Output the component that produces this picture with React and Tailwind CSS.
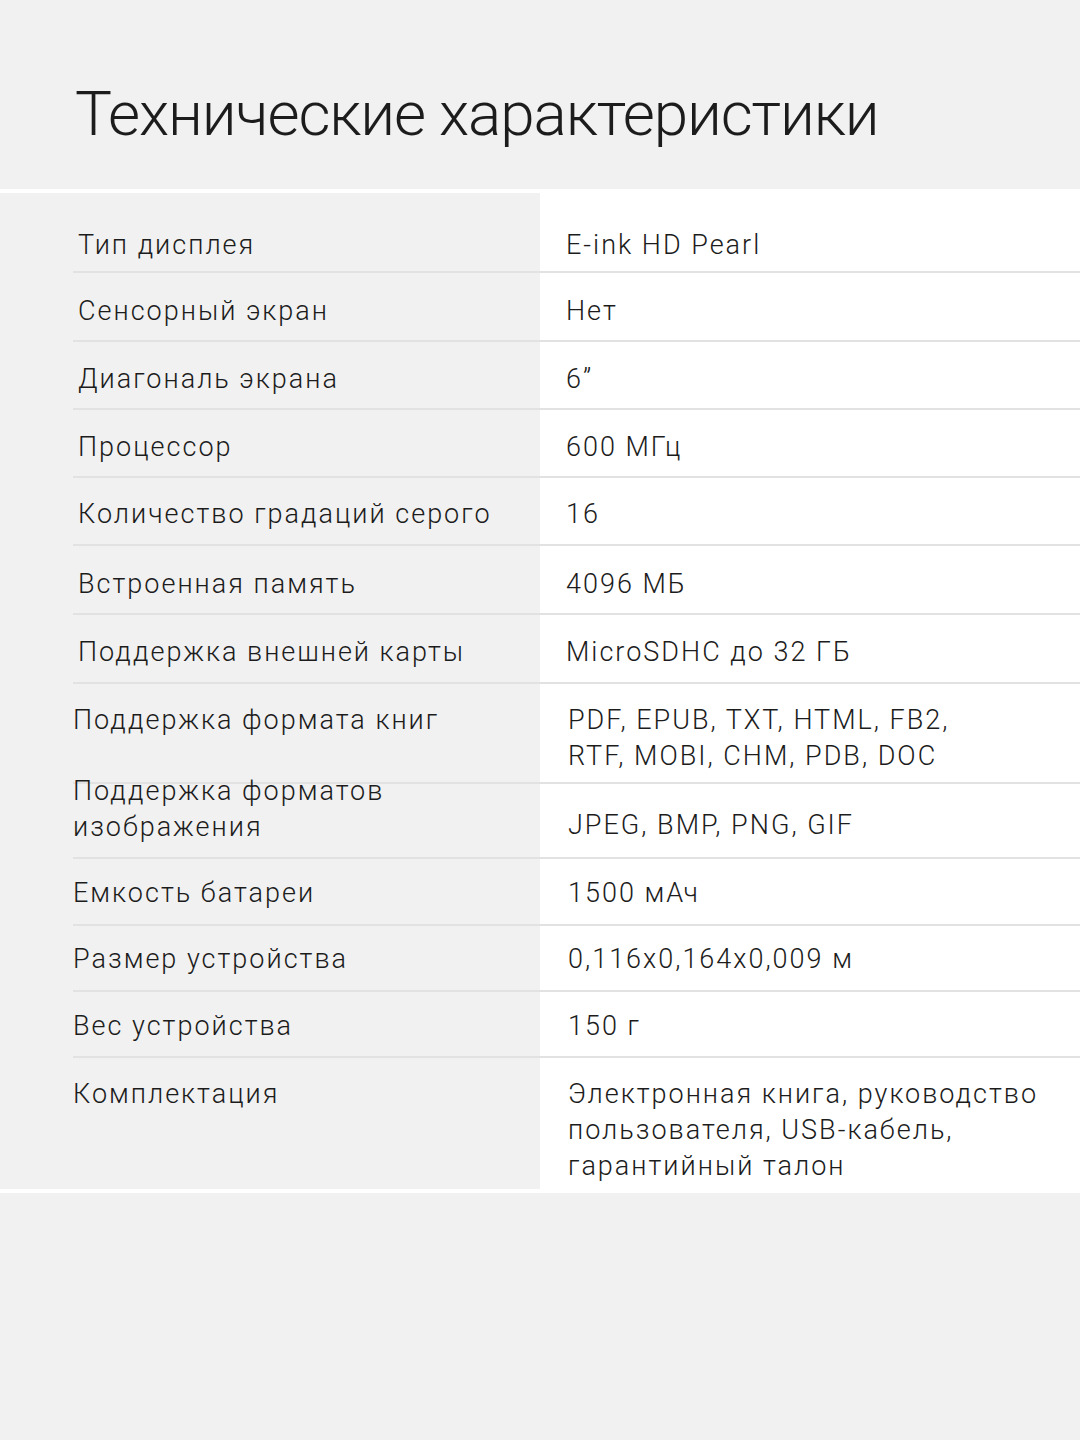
const rows = [
  { label: "Тип дисплея", value: "E-ink HD Pearl", row: "h-[80px] pt-[26px]", shift: "pl-[5px]", vshift: "pl-[26px]" },
  { label: "Сенсорный экран", value: "Нет", row: "h-[69px] pt-[8px]", shift: "pl-[5px]", vshift: "pl-[26px]" },
  { label: "Диагональ экрана", value: "6”", row: "h-[68px] pt-[8px]", shift: "pl-[5px]", vshift: "pl-[26px]" },
  { label: "Процессор", value: "600 МГц", row: "h-[68px] pt-[8px]", shift: "pl-[5px]", vshift: "pl-[26px]" },
  { label: "Количество градаций серого", value: "16", row: "h-[68px] pt-[6px]", shift: "pl-[5px]", vshift: "pl-[26px]" },
  { label: "Встроенная память", value: "4096 МБ", row: "h-[69px] pt-[8px]", shift: "pl-[5px]", vshift: "pl-[26px]" },
  { label: "Поддержка внешней карты", value: "MicroSDHC до 32 ГБ", row: "h-[69px] pt-[6px]", shift: "pl-[5px]", vshift: "pl-[26px]" },
];

function Row({ label, value, row, shift, vshift, last }) {
  const line = last ? "" : "border-b-2 border-[#e2e2e2]";
  return (
    <div className="flex">
      <div className="w-[540px] shrink-0 bg-[#f1f1f1] pl-[73px]">
        <div className={`flex items-center ${row} ${line} ${shift}`}>{label}</div>
      </div>
      <div className={`flex flex-1 items-center ${row} ${line} ${vshift}`}>{value}</div>
    </div>
  );
}

export default function App() {
  return (
    <div
      className="min-h-[1440px] w-[1080px] bg-[#f1f1f1] text-[#1c1c1c]"
      style={{ fontFamily: "Roboto, 'Liberation Sans', sans-serif" }}
    >
      {/* Title */}
      <div className="h-[189px] pl-[75px] pt-[78px]">
        <h1 className="text-[62px] font-light leading-[72px] tracking-[-1.1px]">
          Технические характеристики
        </h1>
      </div>

      {/* Spec table */}
      <div className="bg-white py-[4px] text-[27px] font-light leading-[36px] tracking-[2px]">
        {rows.map((r) => (
          <Row key={r.label} {...r} />
        ))}

        {/* Book formats */}
        <div className="flex">
          <div className="w-[540px] shrink-0 bg-[#f1f1f1] pl-[73px]">
            <div className="h-[100px] border-b-2 border-[#e2e2e2] pt-[18px]">Поддержка формата книг</div>
          </div>
          <div className="h-[100px] flex-1 border-b-2 border-[#e2e2e2] pl-[28px] pt-[18px]">
            PDF, EPUB, TXT, HTML, FB2,
            <br />
            RTF, MOBI, CHM, PDB, DOC
          </div>
        </div>

        {/* Image formats */}
        <div className="flex">
          <div className="w-[540px] shrink-0 bg-[#f1f1f1] pl-[73px]">
            <div className="flex h-[75px] items-center border-b-2 border-[#e2e2e2]">
              <div className="relative -top-[12px]">
                Поддержка форматов
                <br />
                изображения
              </div>
            </div>
          </div>
          <div className="flex h-[75px] flex-1 items-center border-b-2 border-[#e2e2e2] pl-[28px] pt-[8px]">
            JPEG, BMP, PNG, GIF
          </div>
        </div>

        <Row label="Емкость батареи" value="1500 мАч" row="h-[67px] pt-[2px]" shift="" vshift="pl-[28px]" />
        <Row label="Размер устройства" value="0,116x0,164x0,009 м" row="h-[66px] pt-[2px]" shift="" vshift="pl-[28px]" />
        <Row label="Вес устройства" value="150 г" row="h-[66px] pt-[4px]" shift="" vshift="pl-[28px]" />

        {/* Package contents */}
        <div className="flex">
          <div className="w-[540px] shrink-0 bg-[#f1f1f1] pl-[73px]">
            <div className="h-[131px] pt-[18px]">Комплектация</div>
          </div>
          <div className="h-[131px] flex-1 pl-[28px] pt-[18px]">
            Электронная книга, руководство
            <br />
            пользователя, USB-кабель,
            <br />
            гарантийный талон
          </div>
        </div>
      </div>
    </div>
  );
}
